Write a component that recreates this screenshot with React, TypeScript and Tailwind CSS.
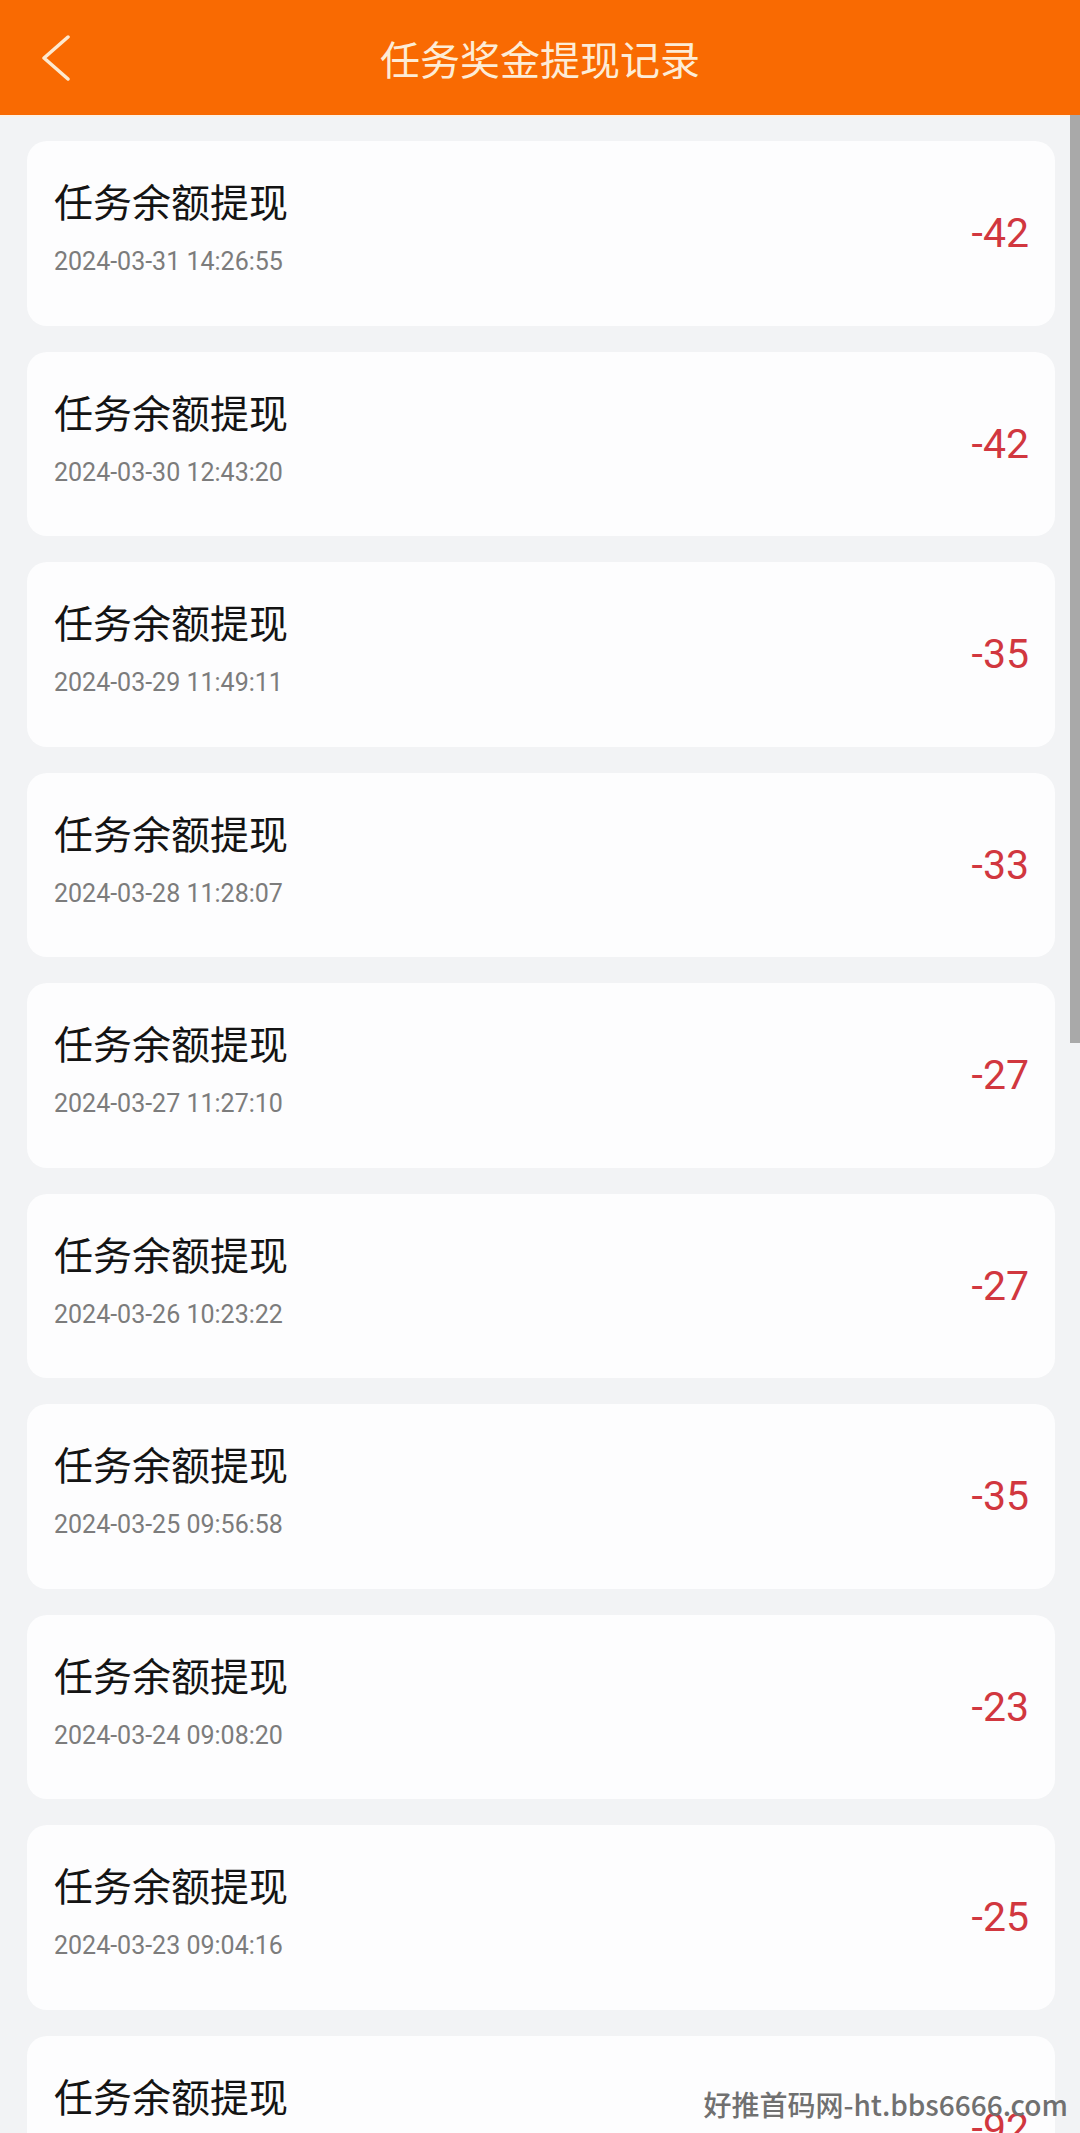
import { ReactNode } from "react";

const records = [
  { time: "2024-03-31 14:26:55", amount: -42 },
  { time: "2024-03-30 12:43:20", amount: -42 },
  { time: "2024-03-29 11:49:11", amount: -35 },
  { time: "2024-03-28 11:28:07", amount: -33 },
  { time: "2024-03-27 11:27:10", amount: -27 },
  { time: "2024-03-26 10:23:22", amount: -27 },
  { time: "2024-03-25 09:56:58", amount: -35 },
  { time: "2024-03-24 09:08:20", amount: -23 },
  { time: "2024-03-23 09:04:16", amount: -25 },
  { time: "2024-03-22 09:01:45", amount: -92 },
];

const cjk = { fontFamily: '"Noto Sans CJK SC", "Noto Sans", sans-serif' };
const roboto = { fontFamily: 'Roboto, "Noto Sans CJK SC", sans-serif' };

function Header({ children }: { children: ReactNode }) {
  return (
    <div className="flex h-[115px] items-center bg-[#f96a02]">
      <div className="flex w-[120px] items-center pl-[41px]">
        <svg width="30" height="46" viewBox="0 0 30 46" fill="none">
          <polyline
            points="27,2 3,23 27,44"
            stroke="#fde9cf"
            strokeWidth="3.5"
            strokeLinecap="round"
            strokeLinejoin="round"
          />
        </svg>
      </div>
      <h1 className="flex-1 text-center text-[40px] leading-[48px] text-[#fdecd6]" style={cjk}>
        {children}
      </h1>
      <div className="w-[120px]" />
    </div>
  );
}

function RecordCard({ time, amount }: { time: string; amount: number }) {
  return (
    <div className="flex h-[184.5px] shrink-0 items-center justify-between rounded-[20px] bg-[#fdfdfe] pl-[27px] pr-[26px]">
      <div className="flex flex-col self-start pt-[35px]">
        <p className="text-[39px] leading-[48px] text-[#141414]" style={cjk}>
          任务余额提现
        </p>
        <p className="mt-[23px] text-[25px] leading-[30px] text-[#7c7c7c]" style={roboto}>
          {time}
        </p>
      </div>
      <span className="text-[41px] leading-[48px] text-[#d1373f]" style={roboto}>
        {amount}
      </span>
    </div>
  );
}

export default function App() {
  return (
    <div className="relative h-[2133px] overflow-hidden bg-[#f2f3f5]">
      <Header>任务奖金提现记录</Header>
      <div className="h-[2px] bg-[#fbf1e6]" />

      <div className="flex flex-col gap-[26px] pl-[27px] pr-[25px] pt-[24px]">
        {records.map((r, i) => (
          <RecordCard key={i} time={r.time} amount={r.amount} />
        ))}
      </div>

      {/* scrollbar thumb */}
      <div className="absolute right-0 top-[115px] h-[928px] w-[10px] bg-[#a9a9a9]" />

      {/* watermark */}
      <div
        className="absolute bottom-[12px] right-[12px] text-[28px] font-medium leading-[34px] text-[#707070]"
        style={cjk}
      >
        好推首码网-ht.bbs6666.com
      </div>
    </div>
  );
}
